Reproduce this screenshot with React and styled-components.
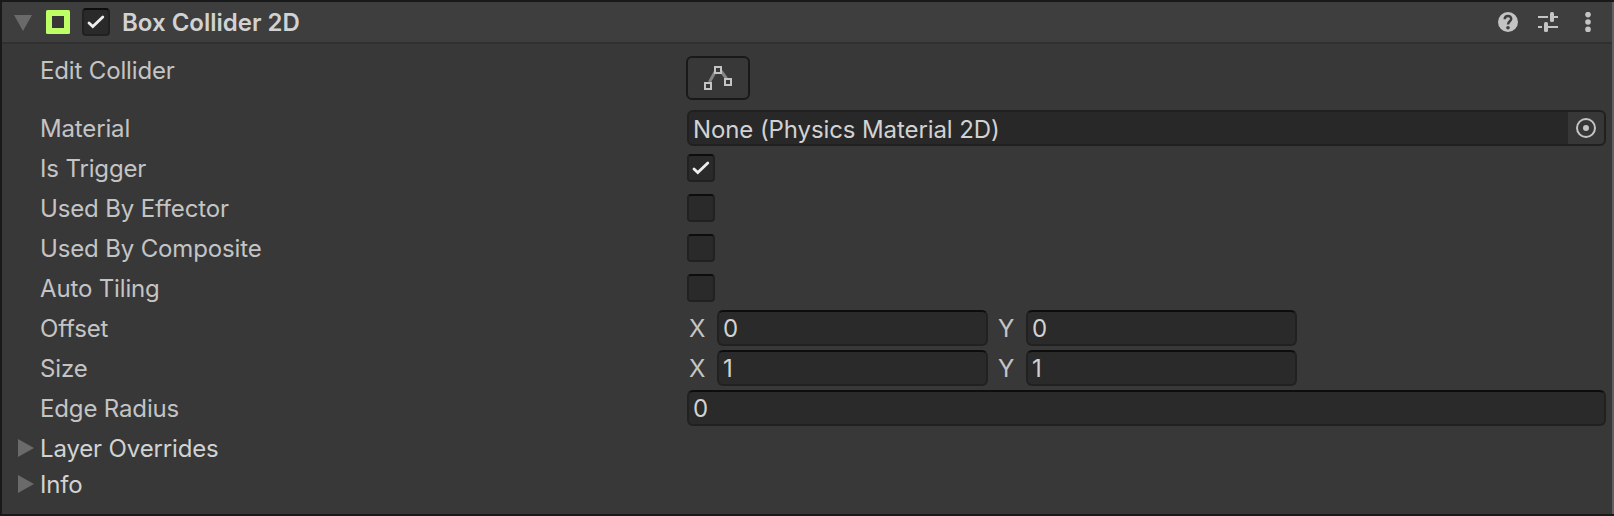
import React from 'react';
import styled, { createGlobalStyle } from 'styled-components';

const Global = createGlobalStyle`
  *, *::before, *::after { box-sizing: border-box; }
  body { margin: 0; background: #383838; }
`;

const Panel = styled.section`
  width: 1614px;
  height: 516px;
  overflow: hidden;
  background: #383838;
  border: solid #191919;
  border-width: 2px 0 2px 2px;
  box-shadow: inset -2px 0 #606060;
  font-family: Inter, 'Liberation Sans', sans-serif;
  font-size: 24px;
  line-height: 36px;
  letter-spacing: -0.15px;
  color: #c4c4c4;
  white-space: nowrap;
`;

const Header = styled.header`
  display: flex;
  align-items: center;
  height: 42px;
  margin-right: 2px;
  padding: 0 14px 0 12px;
  background: #3e3e3e;
  border-bottom: 2px solid #303030;
`;

const Arrow = styled.svg`
  display: block;
  flex: none;
  width: 18px;
  height: 18px;
  fill: #6a6a6a;
`;

const ColliderIcon = styled.svg`
  width: 24px;
  height: 24px;
  margin: 0 12px 0 14px;
`;

const Title = styled.h1`
  flex: 1;
  margin: 0 0 0 12px;
  padding-top: 2px;
  font-size: 24px;
  font-weight: 600;
  line-height: 36px;
  letter-spacing: 0;
  color: #d2d2d2;
`;

const HeaderTools = styled.div`
  display: flex;
  gap: 20px;
`;

const ToolIcon = styled.svg`
  display: block;
  width: 20px;
  height: 20px;
`;

const Body = styled.div`
  display: flex;
  flex-direction: column;
  gap: 4px;
  padding: 12px 8px 0 0;
`;

const Row = styled.div`
  display: grid;
  grid-template-columns: 647px 1fr;
  align-items: center;
  height: 36px;
  padding-left: 38px;
`;

const EditRow = styled(Row)`
  align-items: start;
  height: 44px;
  margin-bottom: 6px;
`;

const Label = styled.span`
  margin-top: ${({ $lift = 0 }) => -$lift}px;
  padding-top: 2px;
  line-height: 34px;
`;

const EditButton = styled.button`
  display: grid;
  place-items: center;
  width: 64px;
  height: 44px;
  margin: 0 0 0 -1px;
  padding: 0;
  background: #383838;
  border: 2px solid #191919;
  border-radius: 6px;
`;

const Box = styled.span`
  display: block;
  flex: none;
  width: 28px;
  height: 28px;
  background: #2a2a2a;
  border: 2px solid #212121;
  border-top-color: #0d0d0d;
  border-radius: 4px;
`;

const Check = styled.svg`
  display: block;
  width: 24px;
  height: 24px;
  fill: none;
  stroke: #eeeeee;
  stroke-width: 2.8;
  stroke-linecap: round;
`;

const Field = styled.div`
  width: ${({ $width }) => ($width ? `${$width}px` : '100%')};
  height: 36px;
  padding-left: 4px;
  line-height: 34px;
  background: #2a2a2a;
  border: 2px solid #212121;
  border-top-color: #0d0d0d;
  border-radius: 6px;
  color: #d2d2d2;
`;

const ObjectField = styled(Field)`
  display: flex;
  justify-content: space-between;
  overflow: hidden;
  line-height: 36px;
  letter-spacing: -0.1px;
  background: #282828;
  border-color: #202020;
`;

const Picker = styled.span`
  display: grid;
  place-items: center;
  width: 36px;
  height: 32px;
  background: #373737;
`;

const Vector = styled.div`
  display: flex;
  height: 36px;
`;

const Axis = styled.span`
  width: ${({ $width }) => $width}px;
  padding: 2px 0 0 ${({ $inset }) => $inset}px;
  line-height: 34px;
`;

const Foldouts = styled.div`
  display: flex;
  flex-direction: column;
`;

const Foldout = styled.div`
  display: flex;
  align-items: center;
  gap: 4px;
  height: 36px;
  padding-left: 16px;
  color: #d2d2d2;
`;

const Checkbox = ({ checked }) => (
  <Box role="checkbox" aria-checked={!!checked}>
    {checked && (
      <Check viewBox="0 0 24 24">
        <path d="M5 13 8.8 16.6 18.8 7" />
      </Check>
    )}
  </Box>
);

const ToggleRow = ({ label, checked }) => (
  <Row>
    <Label>{label}</Label>
    <Checkbox checked={checked} />
  </Row>
);

const VectorRow = ({ label, x, y }) => (
  <Row>
    <Label>{label}</Label>
    <Vector>
      <Axis $width={30} $inset={2}>X</Axis>
      <Field $width={271}>{x}</Field>
      <Axis $width={38} $inset={10}>Y</Axis>
      <Field $width={271}>{y}</Field>
    </Vector>
  </Row>
);

const FoldoutRow = ({ label }) => (
  <Foldout>
    <Arrow viewBox="0 0 18 18"><path d="M0 0 16 9 0 18Z" /></Arrow>
    <Label>{label}</Label>
  </Foldout>
);

export default function App() {
  return (
    <>
      <Global />
      <Panel>
        <Header>
          <Arrow viewBox="0 0 18 18"><path d="M0 2H18L9 18Z" /></Arrow>
          <ColliderIcon viewBox="0 0 24 24">
            <rect width="24" height="24" rx="1.5" fill="#bfff66" />
            <rect x="6" y="6" width="12" height="12" fill="#373737" />
          </ColliderIcon>
          <Checkbox checked />
          <Title>Box Collider 2D</Title>
          <HeaderTools>
            <ToolIcon viewBox="0 0 20 20">
              <circle cx="10" cy="10" r="10" fill="#c4c4c4" />
              <path d="M6.7 7.2C6.9 3 13.3 3.2 13.2 7 13.1 9.3 10 9.4 10 12.6" fill="none" stroke="#3e3e3e" strokeWidth="2.5" />
              <circle cx="10" cy="15.8" r="1.8" fill="#3e3e3e" />
            </ToolIcon>
            <ToolIcon viewBox="0 0 20 20" fill="#c4c4c4">
              <path d="M0 4H10V6H0ZM16 4H20V6H16ZM0 14H4V16H0ZM10 14H20V16H10Z" />
              <rect x="12" y="0" width="4" height="10" rx="1.5" />
              <rect x="6" y="10" width="4" height="10" rx="1.5" />
            </ToolIcon>
            <ToolIcon viewBox="0 0 20 20" fill="#c4c4c4">
              <circle cx="10" cy="2.6" r="2.8" />
              <circle cx="10" cy="10" r="2.8" />
              <circle cx="10" cy="17.4" r="2.8" />
            </ToolIcon>
          </HeaderTools>
        </Header>
        <Body>
          <EditRow>
            <Label $lift={4}>Edit Collider</Label>
            <EditButton aria-label="Edit Collider">
              <svg width="28" height="24" viewBox="0 0 28 24" fill="none" stroke="#c4c4c4" strokeWidth="2">
                <path d="M5.5 16 11 6M17 5 22.5 12.5" stroke="#858585" strokeWidth="3" />
                <path d="M1 17H7V23H1ZM11 1H17V7H11ZM21 13H27V19H21Z" fill="#383838" />
              </svg>
            </EditButton>
          </EditRow>
          <Row>
            <Label>Material</Label>
            <ObjectField>
              <span>None (Physics Material 2D)</span>
              <Picker>
                <svg width="20" height="20" viewBox="0 0 20 20">
                  <circle cx="10" cy="10" r="9" fill="none" stroke="#c4c4c4" strokeWidth="2" />
                  <circle cx="10" cy="10" r="3" fill="#c4c4c4" />
                </svg>
              </Picker>
            </ObjectField>
          </Row>
          <ToggleRow label="Is Trigger" checked />
          <ToggleRow label="Used By Effector" />
          <ToggleRow label="Used By Composite" />
          <ToggleRow label="Auto Tiling" />
          <VectorRow label="Offset" x="0" y="0" />
          <VectorRow label="Size" x="1" y="1" />
          <Row>
            <Label>Edge Radius</Label>
            <Field>0</Field>
          </Row>
          <Foldouts>
            <FoldoutRow label="Layer Overrides" />
            <FoldoutRow label="Info" />
          </Foldouts>
        </Body>
      </Panel>
    </>
  );
}
